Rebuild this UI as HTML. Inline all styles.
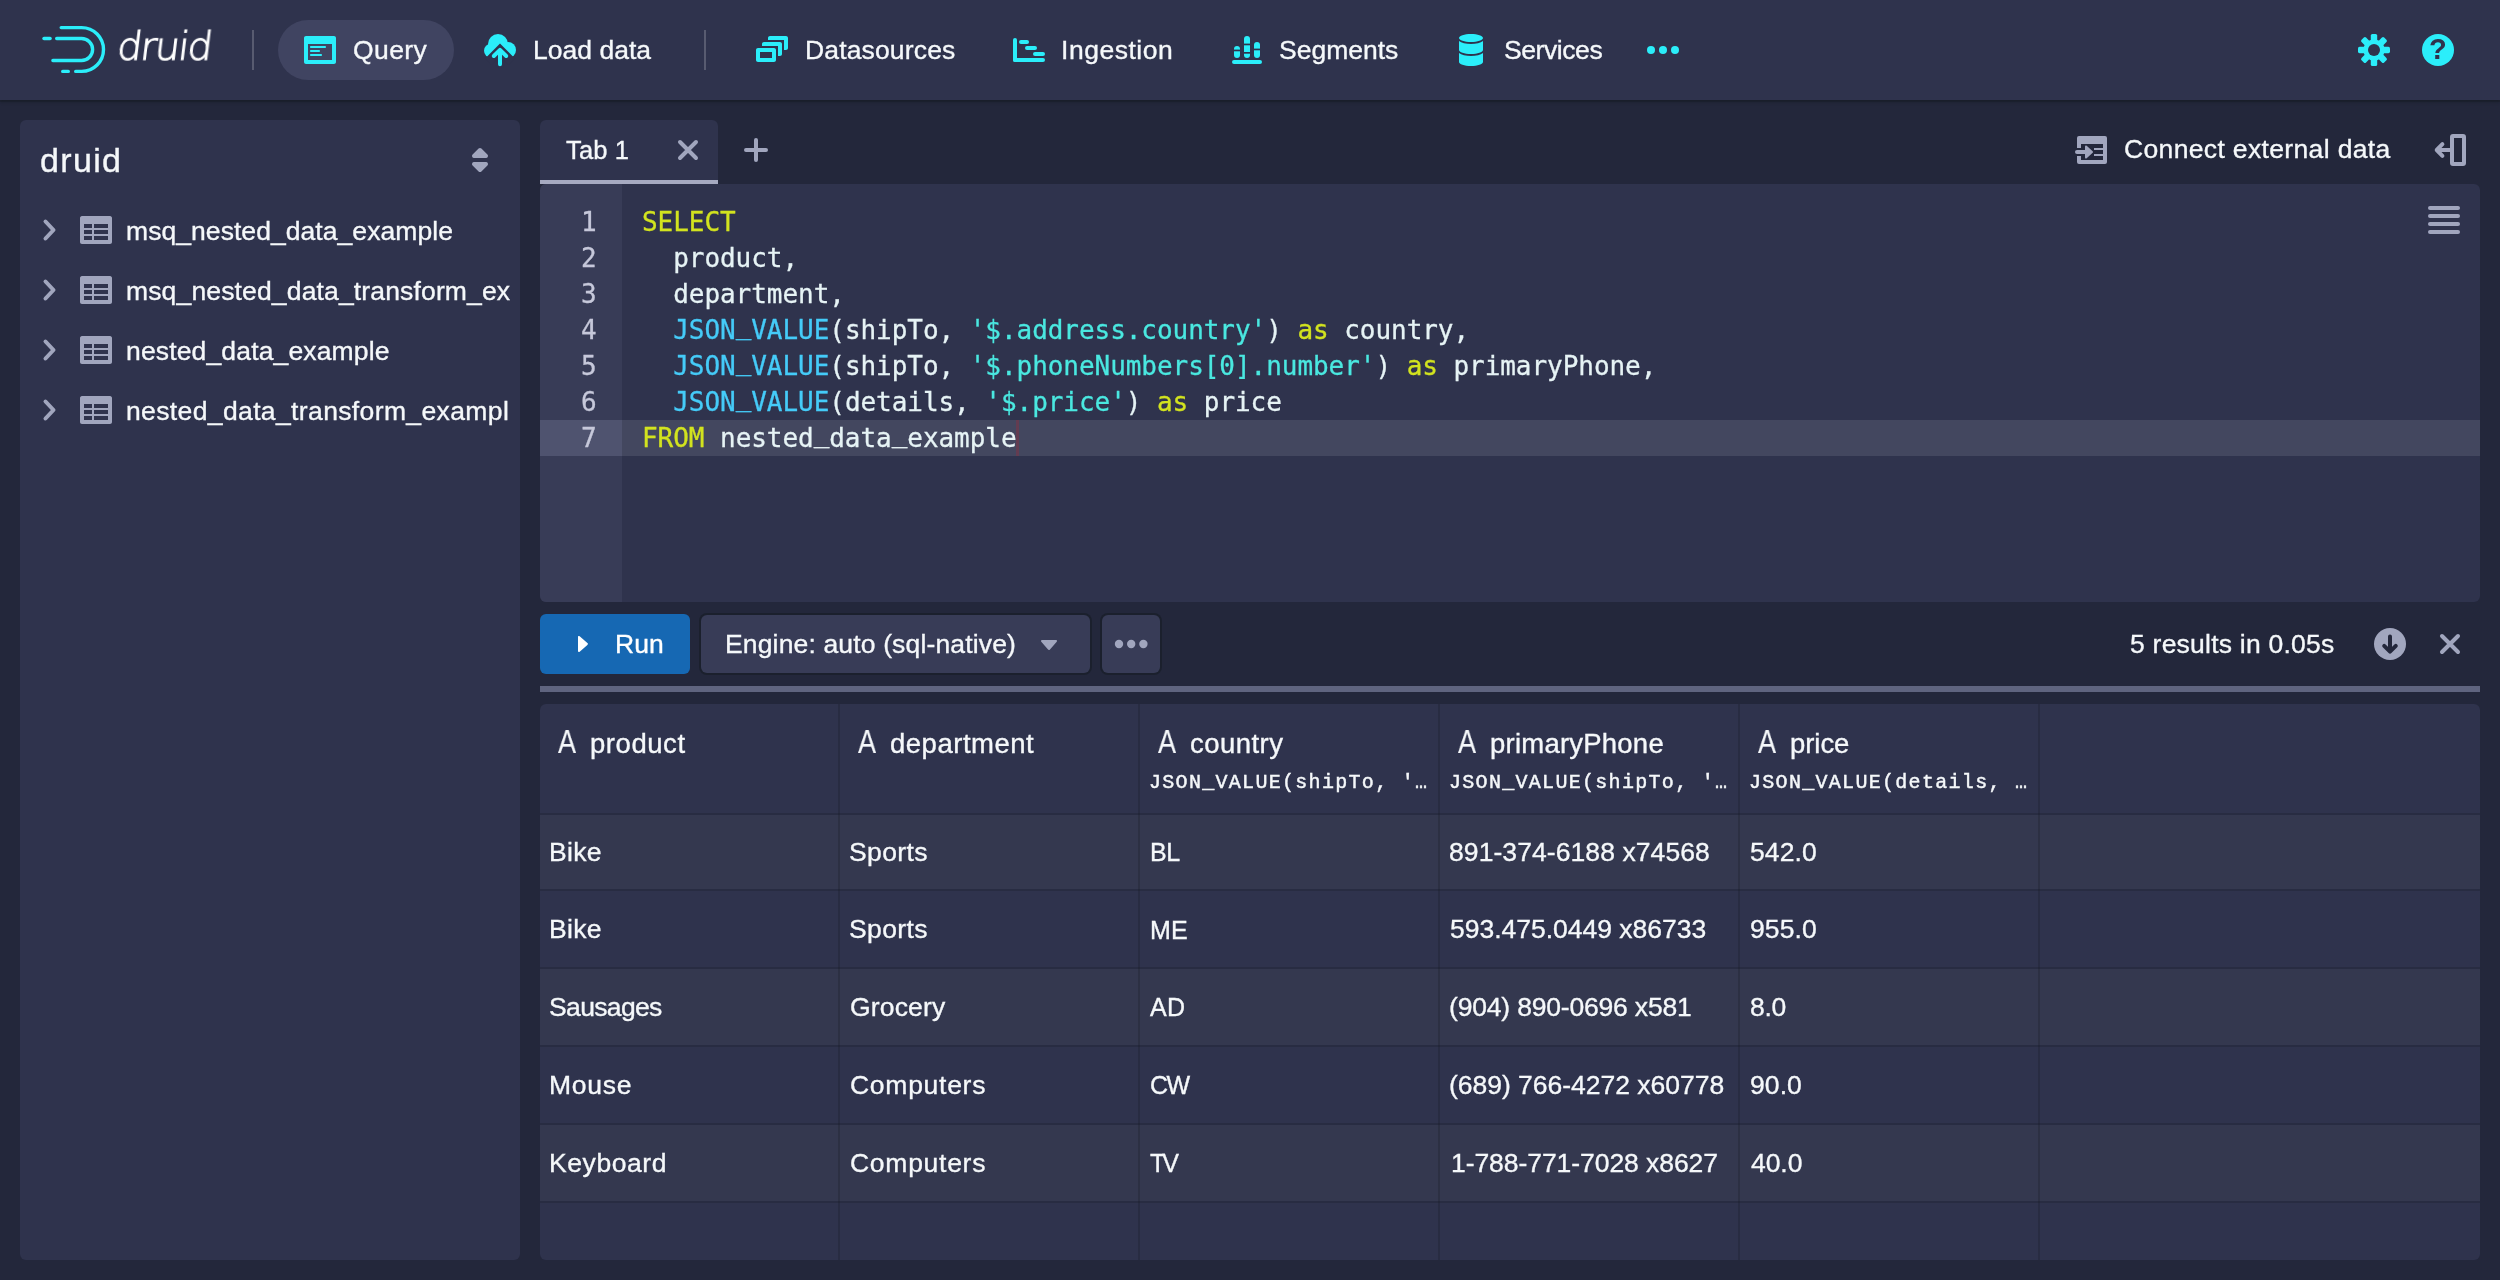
<!DOCTYPE html>
<html lang="en"><head><meta charset="utf-8"><title>Apache Druid</title><style>
html,body{margin:0;padding:0}
body{width:2500px;height:1280px;overflow:hidden;background:#23273b;position:relative;font-family:'Liberation Sans', 'DejaVu Sans', sans-serif}
.t,pre{will-change:transform}
.u{position:relative;top:-5px}
.t{position:absolute;white-space:pre;display:block;-webkit-text-stroke:0.35px currentColor}
.i{position:absolute;display:block;overflow:visible}
</style></head>
<body>
<header style="position:absolute;left:0;top:0;width:2500px;height:100px;background:#2f334d;box-shadow:0 0 0 2px rgba(16,22,26,.2),0 2px 3px rgba(16,22,26,.4);z-index:2">
<svg class="i" style="left:0px;top:0px" width="120" height="100" viewBox="0 0 120 100" ><g fill="none" stroke="#2beefa" stroke-width="3.4" stroke-linecap="round"><path d="M61.200 27.600H81.600a21.900 21.900 0 0 1 0 43.800H75.700"/><path d="M62.700 71.400H68.300"/><path d="M56.700 38.500H81.600a11 11 0 0 1 0 22H52.900"/><path d="M44 38.500H50.100"/></g></svg>
<span class="t" id="logo" style="left:116.00px;top:27.03px;font-size:39.5px;line-height:39.5px;letter-spacing:-1.750px;color:#ffffff;font-family:'DejaVu Sans Light','DejaVu Sans','Liberation Sans', 'DejaVu Sans', sans-serif;font-weight:200;-webkit-text-stroke:1px #fff;transform:skewX(-7deg);transform-origin:0 80%;">druid</span>
<div style="position:absolute;left:252px;top:30px;width:2px;height:40px;background:rgba(255,255,255,.2)"></div>
<div style="position:absolute;left:278px;top:20px;width:176px;height:60px;background:#404461;border-radius:30px"></div>
<svg class="i" style="left:304px;top:34px" width="32" height="32" viewBox="0 0 16 16" ><g fill="#2beefa" fill-rule="evenodd"><path d="M3.5 7h7c.28 0 .5-.22.5-.5s-.22-.5-.5-.5h-7c-.28 0-.5.22-.5.5s.22.5.5.5zM15 1H1c-.55 0-1 .45-1 1v12c0 .55.45 1 1 1h14c.55 0 1-.45 1-1V2c0-.55-.45-1-1-1zm-1 12H2V5h12v8zM3.5 9h4c.28 0 .5-.22.5-.5S7.78 8 7.5 8h-4c-.28 0-.5.22-.5.5s.22.5.5.5zm0 2h5c.28 0 .5-.22.5-.5s-.22-.5-.5-.5h-5c-.28 0-.5.22-.5.5s.22.5.5.5z"/></g></svg>
<span class="t" id="nav_query" style="left:353.00px;top:37.37px;font-size:26.5px;line-height:26.5px;letter-spacing:0.400px;color:#f5f8fa;font-family:'Liberation Sans', 'DejaVu Sans', sans-serif;">Query</span>
<svg class="i" style="left:484px;top:34px" width="32" height="32" viewBox="0 0 16 16" ><g fill="#2beefa"><circle cx="7" cy="5" r="5"/><circle cx="12" cy="8" r="4"/><circle cx="3.5" cy="8.4" r="3.5"/><rect x="3.5" y="6" width="8.5" height="5.700"/></g><rect x="0" y="11.600" width="16" height="4.400" fill="#2f334d"/><path d="M2 13.900L8 7.900l6 6" fill="none" stroke="#2f334d" stroke-width="4.400" stroke-linejoin="miter"/><path d="M8 15V9" fill="none" stroke="#2f334d" stroke-width="4.400" stroke-linecap="round"/><path d="M8 15.100V8.500M4.900 11L8 7.900l3.100 3.100" fill="none" stroke="#2beefa" stroke-width="2" stroke-linecap="round" stroke-linejoin="round"/></svg>
<span class="t" id="nav_load" style="left:533.00px;top:37.37px;font-size:26.5px;line-height:26.5px;letter-spacing:0.025px;color:#f5f8fa;font-family:'Liberation Sans', 'DejaVu Sans', sans-serif;">Load data</span>
<div style="position:absolute;left:704px;top:30px;width:2px;height:40px;background:rgba(255,255,255,.2)"></div>
<svg class="i" style="left:756px;top:34px" width="32" height="32" viewBox="0 0 16 16" ><g fill="#2beefa" fill-rule="evenodd"><path d="M12 3.98H4c-.55 0-1 .45-1 1v1h8v5h1c.55 0 1-.45 1-1v-5c0-.55-.45-1-1-1zm3-3H7c-.55 0-1 .45-1 1v1h8v5h1c.55 0 1-.45 1-1v-5c0-.55-.45-1-1-1zm-6 6H1c-.55 0-1 .45-1 1v5c0 .55.45 1 1 1h8c.55 0 1-.45 1-1v-5c0-.55-.45-1-1-1zm-1 5H2v-3h6v3z"/></g></svg>
<span class="t" id="nav_ds" style="left:805.00px;top:37.37px;font-size:26.5px;line-height:26.5px;letter-spacing:0.150px;color:#f5f8fa;font-family:'Liberation Sans', 'DejaVu Sans', sans-serif;">Datasources</span>
<svg class="i" style="left:1013px;top:34px" width="32" height="32" viewBox="0 0 16 16" ><g fill="#2beefa"><rect x="0" y="2" width="2" height="12" rx="1"/><rect x="0" y="12" width="16" height="2" rx="1"/><rect x="3" y="3" width="5" height="2" rx="1"/><rect x="6" y="6" width="6" height="2" rx="1"/><rect x="10" y="9" width="6" height="2" rx="1"/></g></svg>
<span class="t" id="nav_ing" style="left:1061.00px;top:37.37px;font-size:26.5px;line-height:26.5px;letter-spacing:0.525px;color:#f5f8fa;font-family:'Liberation Sans', 'DejaVu Sans', sans-serif;">Ingestion</span>
<svg class="i" style="left:1231px;top:34px" width="32" height="32" viewBox="0 0 32 32" ><g fill="#2beefa"><rect x="1" y="26" width="30" height="4" rx="2"/><rect x="3" y="12" width="6" height="12" rx="3"/><rect x="13" y="2" width="6" height="22" rx="3"/><rect x="23" y="8" width="6" height="16" rx="3"/></g><g fill="#2f334d"><rect x="3" y="15.6" width="6" height="1.7"/><rect x="13" y="9.6" width="6" height="1.7"/><rect x="13" y="18" width="6" height="1.7"/><rect x="23" y="14.6" width="6" height="1.7"/></g></svg>
<span class="t" id="nav_seg" style="left:1278.50px;top:37.37px;font-size:26.5px;line-height:26.5px;letter-spacing:0.007px;color:#f5f8fa;font-family:'Liberation Sans', 'DejaVu Sans', sans-serif;">Segments</span>
<svg class="i" style="left:1455px;top:34px" width="32" height="32" viewBox="0 0 16 16" ><g fill="#2beefa" fill-rule="evenodd"><path d="M8 4c3.31 0 6-.9 6-2s-2.69-2-6-2C4.68 0 2 .9 2 2s2.69 2 6 2zm-6-.48V8c0 1.1 2.69 2 6 2s6-.9 6-2V3.520C12.78 4.4 10.56 5 8 5s-4.78-.6-6-1.480zm0 6V14c0 1.100 2.690 2 6 2s6-.9 6-2V9.520C12.780 10.400 10.560 11 8 11s-4.780-.6-6-1.480z"/></g></svg>
<span class="t" id="nav_srv" style="left:1503.50px;top:37.37px;font-size:26.5px;line-height:26.5px;letter-spacing:-0.421px;color:#f5f8fa;font-family:'Liberation Sans', 'DejaVu Sans', sans-serif;">Services</span>
<svg class="i" style="left:1643px;top:42px" width="40" height="16" viewBox="0 0 40 16" ><circle cx="8" cy="8" r="4" fill="#2beefa"/><circle cx="20" cy="8" r="4" fill="#2beefa"/><circle cx="32" cy="8" r="4" fill="#2beefa"/></svg>
<svg class="i" style="left:2358px;top:34px" width="32" height="32" viewBox="0 0 32 32" ><g fill="#2beefa"><rect x="12.8" y="0" width="6.4" height="9" rx="1.6" transform="rotate(0 16 16)"/><rect x="12.8" y="0" width="6.4" height="9" rx="1.6" transform="rotate(45 16 16)"/><rect x="12.8" y="0" width="6.4" height="9" rx="1.6" transform="rotate(90 16 16)"/><rect x="12.8" y="0" width="6.4" height="9" rx="1.6" transform="rotate(135 16 16)"/><rect x="12.8" y="0" width="6.4" height="9" rx="1.6" transform="rotate(180 16 16)"/><rect x="12.8" y="0" width="6.4" height="9" rx="1.6" transform="rotate(225 16 16)"/><rect x="12.8" y="0" width="6.4" height="9" rx="1.6" transform="rotate(270 16 16)"/><rect x="12.8" y="0" width="6.4" height="9" rx="1.6" transform="rotate(315 16 16)"/><circle cx="16" cy="16" r="10.6"/></g><circle cx="16" cy="16" r="6" fill="#2f334d"/></svg>
<div style="position:absolute;left:2422px;top:34px;width:32px;height:32px;background:#2beefa;border-radius:16px"></div>
<span class="t" id="help_q" style="left:2429.30px;top:35.45px;font-size:29px;line-height:29px;letter-spacing:0.000px;color:#2f334d;font-family:'Liberation Sans', 'DejaVu Sans', sans-serif;font-weight:bold;-webkit-text-stroke:0;">?</span>
</header>
<nav style="position:absolute;left:20px;top:120px;width:500px;height:1140px;background:#2f334d;border-radius:6px;overflow:hidden">
</nav>
<span class="t" id="sb_title" style="left:39.50px;top:142.72px;font-size:34px;line-height:34px;letter-spacing:1.350px;color:#f5f8fa;font-family:'Liberation Sans', 'DejaVu Sans', sans-serif;">druid</span>
<svg class="i" style="left:464px;top:144px" width="32" height="32" viewBox="0 0 16 16" ><g fill="#a1a6be" fill-rule="evenodd"><path d="M5 7h6a1.003 1.003 0 00.71-1.71l-3-3C8.53 2.11 8.28 2 8 2s-.53.11-.71.29l-3 3A1.003 1.003 0 005 7zm6 2H5a1.003 1.003 0 00-.71 1.710l3 3c.18.18.43.29.71.29s.53-.11.71-.29l3-3A1.003 1.003 0 0011 9z"/></g></svg>
<svg class="i" style="left:34px;top:214px" width="32" height="32" viewBox="0 0 32 32" ><path d="M11.5 7.5L19.5 16l-8 8.500" fill="none" stroke="#a1a6be" stroke-width="4" stroke-linecap="round" stroke-linejoin="round"/></svg>
<svg class="i" style="left:80px;top:214px" width="32" height="32" viewBox="0 0 16 16" ><g fill="#a1a6be" fill-rule="evenodd"><path d="M15 1H1c-.6 0-1 .5-1 1v12c0 .6.4 1 1 1h14c.6 0 1-.4 1-1V2c0-.5-.4-1-1-1zM6 13H2v-2h4v2zm0-3H2V8h4v2zm0-3H2V5h4v2zm8 6H7v-2h7v2zm0-3H7V8h7v2zm0-3H7V5h7v2z"/></g></svg>
<span class="t" id="tree0" style="left:126.00px;top:217.57px;font-size:26.5px;line-height:26.5px;letter-spacing:0.059px;color:#f5f8fa;font-family:'Liberation Sans', 'DejaVu Sans', sans-serif;">msq_nested_data_example</span>
<svg class="i" style="left:34px;top:274px" width="32" height="32" viewBox="0 0 32 32" ><path d="M11.5 7.5L19.5 16l-8 8.500" fill="none" stroke="#a1a6be" stroke-width="4" stroke-linecap="round" stroke-linejoin="round"/></svg>
<svg class="i" style="left:80px;top:274px" width="32" height="32" viewBox="0 0 16 16" ><g fill="#a1a6be" fill-rule="evenodd"><path d="M15 1H1c-.6 0-1 .5-1 1v12c0 .6.4 1 1 1h14c.6 0 1-.4 1-1V2c0-.5-.4-1-1-1zM6 13H2v-2h4v2zm0-3H2V8h4v2zm0-3H2V5h4v2zm8 6H7v-2h7v2zm0-3H7V8h7v2zm0-3H7V5h7v2z"/></g></svg>
<span class="t" id="tree1" style="left:126.00px;top:277.57px;font-size:26.5px;line-height:26.5px;letter-spacing:0.150px;color:#f5f8fa;font-family:'Liberation Sans', 'DejaVu Sans', sans-serif;">msq_nested_data_transform_ex</span>
<svg class="i" style="left:34px;top:334px" width="32" height="32" viewBox="0 0 32 32" ><path d="M11.5 7.5L19.5 16l-8 8.500" fill="none" stroke="#a1a6be" stroke-width="4" stroke-linecap="round" stroke-linejoin="round"/></svg>
<svg class="i" style="left:80px;top:334px" width="32" height="32" viewBox="0 0 16 16" ><g fill="#a1a6be" fill-rule="evenodd"><path d="M15 1H1c-.6 0-1 .5-1 1v12c0 .6.4 1 1 1h14c.6 0 1-.4 1-1V2c0-.5-.4-1-1-1zM6 13H2v-2h4v2zm0-3H2V8h4v2zm0-3H2V5h4v2zm8 6H7v-2h7v2zm0-3H7V8h7v2zm0-3H7V5h7v2z"/></g></svg>
<span class="t" id="tree2" style="left:126.00px;top:337.57px;font-size:26.5px;line-height:26.5px;letter-spacing:0.150px;color:#f5f8fa;font-family:'Liberation Sans', 'DejaVu Sans', sans-serif;">nested_data_example</span>
<svg class="i" style="left:34px;top:394px" width="32" height="32" viewBox="0 0 32 32" ><path d="M11.5 7.5L19.5 16l-8 8.500" fill="none" stroke="#a1a6be" stroke-width="4" stroke-linecap="round" stroke-linejoin="round"/></svg>
<svg class="i" style="left:80px;top:394px" width="32" height="32" viewBox="0 0 16 16" ><g fill="#a1a6be" fill-rule="evenodd"><path d="M15 1H1c-.6 0-1 .5-1 1v12c0 .6.4 1 1 1h14c.6 0 1-.4 1-1V2c0-.5-.4-1-1-1zM6 13H2v-2h4v2zm0-3H2V8h4v2zm0-3H2V5h4v2zm8 6H7v-2h7v2zm0-3H7V8h7v2zm0-3H7V5h7v2z"/></g></svg>
<span class="t" id="tree3" style="left:126.00px;top:397.57px;font-size:26.5px;line-height:26.5px;letter-spacing:0.373px;color:#f5f8fa;font-family:'Liberation Sans', 'DejaVu Sans', sans-serif;">nested_data_transform_exampl</span>
<div style="position:absolute;left:540px;top:120px;width:178px;height:64px;background:#2f334d;border-radius:6px 6px 0 0"></div>
<div style="position:absolute;left:540px;top:180px;width:178px;height:4px;background:#a6aac1"></div>
<span class="t" id="tab1" style="left:565.50px;top:137.91px;font-size:25.5px;line-height:25.5px;letter-spacing:0.150px;color:#f5f8fa;font-family:'Liberation Sans', 'DejaVu Sans', sans-serif;">Tab 1</span>
<svg class="i" style="left:672px;top:134px" width="32" height="32" viewBox="0 0 32 32" ><path d="M8 8l16 16M24 8L8 24" stroke="#a1a6be" stroke-width="4" stroke-linecap="round"/></svg>
<svg class="i" style="left:740px;top:134px" width="32" height="32" viewBox="0 0 32 32" ><path d="M16 6v20M6 16h20" stroke="#a1a6be" stroke-width="4" stroke-linecap="round"/></svg>
<svg class="i" style="left:2075px;top:134px" width="34" height="32" viewBox="0 0 34 32" ><rect x="2" y="2" width="30" height="28" rx="2" fill="#a1a6be"/><rect x="6" y="10" width="22" height="16" fill="#23273b"/><rect x="19" y="14" width="9" height="2" fill="#a1a6be"/><rect x="19" y="20" width="9" height="2" fill="#a1a6be"/><rect x="0" y="14" width="6.500" height="8" fill="#23273b"/><path d="M2 18h12" stroke="#a1a6be" stroke-width="4" stroke-linecap="round"/><path d="M11 12.500l6 5.500-6 5.500z" fill="#a1a6be" stroke="#a1a6be" stroke-width="2" stroke-linejoin="round"/></svg>
<span class="t" id="connect" style="left:2124.00px;top:136.17px;font-size:26.5px;line-height:26.5px;letter-spacing:0.350px;color:#f5f8fa;font-family:'Liberation Sans', 'DejaVu Sans', sans-serif;">Connect external data</span>
<svg class="i" style="left:2434px;top:134px" width="32" height="32" viewBox="0 0 32 32" ><rect x="18" y="2" width="12" height="28" rx="1" fill="none" stroke="#a1a6be" stroke-width="4"/><path d="M16 16H4M8.400 10.200L2.700 16l5.700 5.800" fill="none" stroke="#a1a6be" stroke-width="4" stroke-linecap="round" stroke-linejoin="round"/></svg>
<section style="position:absolute;left:540px;top:184px;width:1940px;height:418px;background:#2f334d;border-radius:6px;overflow:hidden">
<div style="position:absolute;left:0px;top:0px;width:82px;height:418px;background:#383c57"></div>
<div style="position:absolute;left:0px;top:236px;width:1940px;height:36px;background:#43475f"></div>
<div style="position:absolute;left:0px;top:236px;width:82px;height:36px;background:#4f536f"></div>
<div style="position:absolute;left:476px;top:236px;width:3px;height:36px;background:#7a3548;opacity:.6"></div>
</section>
<pre id="code" style="position:absolute;left:642px;top:204px;margin:0;font-family:'DejaVu Sans Mono', 'Liberation Mono', monospace;font-size:26px;line-height:36px;letter-spacing:-0.05px;color:#e6f3f5;white-space:pre;-webkit-text-stroke:0.3px currentColor"><span style="color:#d2e31f">SELECT</span>
  product,
  department,
  <span style="color:#45cbf8">JSON<span class="u">_</span>VALUE</span>(shipTo, <span style="color:#4ae8e0">&#x27;$.address.country&#x27;</span>) <span style="color:#d2e31f">as</span> country,
  <span style="color:#45cbf8">JSON<span class="u">_</span>VALUE</span>(shipTo, <span style="color:#4ae8e0">&#x27;$.phoneNumbers[0].number&#x27;</span>) <span style="color:#d2e31f">as</span> primaryPhone,
  <span style="color:#45cbf8">JSON<span class="u">_</span>VALUE</span>(details, <span style="color:#4ae8e0">&#x27;$.price&#x27;</span>) <span style="color:#d2e31f">as</span> price
<span style="color:#d2e31f">FROM</span> nested<span class="u">_</span>data<span class="u">_</span>example</pre>
<pre id="lnum" style="position:absolute;left:580.5px;top:204px;margin:0;font-family:'DejaVu Sans Mono', 'Liberation Mono', monospace;font-size:26px;line-height:36px;letter-spacing:-0.050px;color:#c6c8da;white-space:pre;-webkit-text-stroke:0.3px currentColor">1
2
3
4
5
6
7</pre>
<svg class="i" style="left:2428px;top:204px" width="32" height="32" viewBox="0 0 32 32" ><rect x="0" y="2" width="32" height="4" rx="2" fill="#a1a6be"/><rect x="0" y="10" width="32" height="4" rx="2" fill="#a1a6be"/><rect x="0" y="18" width="32" height="4" rx="2" fill="#a1a6be"/><rect x="0" y="26" width="32" height="4" rx="2" fill="#a1a6be"/></svg>
<div style="position:absolute;left:540px;top:614px;width:150px;height:60px;background:#1668b3;border-radius:6px"></div>
<svg class="i" style="left:566px;top:628px" width="32" height="32" viewBox="0 0 16 16" ><g fill="#ffffff" fill-rule="evenodd"><path d="M11 8c0-.15-.07-.28-.17-.37l-4-3.500A.495.495 0 006 4.500v7a.495.495 0 00.83.370l4-3.500c.1-.9.170-.220.170-.370z"/></g></svg>
<span class="t" id="run" style="left:614.50px;top:630.57px;font-size:26.5px;line-height:26.5px;letter-spacing:0.050px;color:#ffffff;font-family:'Liberation Sans', 'DejaVu Sans', sans-serif;">Run</span>
<div style="position:absolute;left:701px;top:615px;width:389px;height:58px;background:#383c57;border-radius:6px;box-shadow:0 0 0 2px rgba(16,22,26,.4)"></div>
<span class="t" id="engine" style="left:724.50px;top:630.57px;font-size:26.5px;line-height:26.5px;letter-spacing:0.150px;color:#f5f8fa;font-family:'Liberation Sans', 'DejaVu Sans', sans-serif;">Engine: auto (sql-native)</span>
<svg class="i" style="left:1033px;top:628px" width="32" height="32" viewBox="0 0 16 16" ><g fill="#a1a6be" fill-rule="evenodd"><path d="M12 6.500c0-.28-.22-.5-.5-.5h-7a.495.495 0 00-.37.830l3.500 4c.9.1.220.170.370.170s.280-.070.370-.170l3.500-4c.080-.090.130-.200.130-.330z"/></g></svg>
<div style="position:absolute;left:1102px;top:615px;width:58px;height:58px;background:#383c57;border-radius:6px;box-shadow:0 0 0 2px rgba(16,22,26,.4)"></div>
<svg class="i" style="left:1110.8px;top:636px" width="40.4" height="16" viewBox="0 0 40.4 16" ><circle cx="8.0" cy="8" r="4.2" fill="#a1a6be"/><circle cx="20.2" cy="8" r="4.2" fill="#a1a6be"/><circle cx="32.4" cy="8" r="4.2" fill="#a1a6be"/></svg>
<span class="t" id="results" style="left:2129.50px;top:630.57px;font-size:26.5px;line-height:26.5px;letter-spacing:0.234px;color:#f5f8fa;font-family:'Liberation Sans', 'DejaVu Sans', sans-serif;">5 results in 0.05s</span>
<svg class="i" style="left:2374px;top:628px" width="32" height="32" viewBox="0 0 32 32" ><circle cx="16" cy="16" r="16" fill="#a1a6be"/><path d="M16 8.500v14.500M10.200 17.800L16 23.600l5.800-5.800" fill="none" stroke="#23273b" stroke-width="4" stroke-linecap="round" stroke-linejoin="round"/></svg>
<svg class="i" style="left:2434px;top:628px" width="32" height="32" viewBox="0 0 32 32" ><path d="M8 8l16 16M24 8L8 24" stroke="#a1a6be" stroke-width="4" stroke-linecap="round"/></svg>
<div style="position:absolute;left:540px;top:686px;width:1940px;height:6px;background:#5f647f"></div>
<section style="position:absolute;left:540px;top:704px;width:1940px;height:556px;background:#2f334d;border-radius:6px;overflow:hidden">
<div style="position:absolute;left:0px;top:111px;width:1940px;height:74px;background:#34384f"></div>
<div style="position:absolute;left:0px;top:265px;width:1940px;height:76px;background:#34384f"></div>
<div style="position:absolute;left:0px;top:421px;width:1940px;height:76px;background:#34384f"></div>
<div style="position:absolute;left:0px;top:109px;width:1940px;height:2px;background:rgba(16,22,26,.22)"></div>
<div style="position:absolute;left:0px;top:185px;width:1940px;height:2px;background:rgba(16,22,26,.22)"></div>
<div style="position:absolute;left:0px;top:263px;width:1940px;height:2px;background:rgba(16,22,26,.22)"></div>
<div style="position:absolute;left:0px;top:341px;width:1940px;height:2px;background:rgba(16,22,26,.22)"></div>
<div style="position:absolute;left:0px;top:419px;width:1940px;height:2px;background:rgba(16,22,26,.22)"></div>
<div style="position:absolute;left:0px;top:497px;width:1940px;height:2px;background:rgba(16,22,26,.22)"></div>
<div style="position:absolute;left:298px;top:0px;width:2px;height:556px;background:rgba(16,22,26,.22)"></div>
<div style="position:absolute;left:598px;top:0px;width:2px;height:556px;background:rgba(16,22,26,.22)"></div>
<div style="position:absolute;left:898px;top:0px;width:2px;height:556px;background:rgba(16,22,26,.22)"></div>
<div style="position:absolute;left:1198px;top:0px;width:2px;height:556px;background:rgba(16,22,26,.22)"></div>
<div style="position:absolute;left:1498px;top:0px;width:2px;height:556px;background:rgba(16,22,26,.22)"></div>
</section>
<span class="t" id="hA0" style="left:558.40px;top:725.37px;font-size:33px;line-height:33px;letter-spacing:0.000px;color:#f5f8fa;font-family:'Liberation Sans', 'DejaVu Sans', sans-serif;transform:scaleX(.82);transform-origin:0 0;-webkit-text-stroke:0.15px currentColor;">A</span>
<span class="t" id="h0" style="left:589.50px;top:730.02px;font-size:27.5px;line-height:27.5px;letter-spacing:0.555px;color:#f5f8fa;font-family:'Liberation Sans', 'DejaVu Sans', sans-serif;">product</span>
<span class="t" id="hA1" style="left:858.40px;top:725.37px;font-size:33px;line-height:33px;letter-spacing:0.000px;color:#f5f8fa;font-family:'Liberation Sans', 'DejaVu Sans', sans-serif;transform:scaleX(.82);transform-origin:0 0;-webkit-text-stroke:0.15px currentColor;">A</span>
<span class="t" id="h1" style="left:889.50px;top:730.02px;font-size:27.5px;line-height:27.5px;letter-spacing:0.513px;color:#f5f8fa;font-family:'Liberation Sans', 'DejaVu Sans', sans-serif;">department</span>
<span class="t" id="hA2" style="left:1158.40px;top:725.37px;font-size:33px;line-height:33px;letter-spacing:0.000px;color:#f5f8fa;font-family:'Liberation Sans', 'DejaVu Sans', sans-serif;transform:scaleX(.82);transform-origin:0 0;-webkit-text-stroke:0.15px currentColor;">A</span>
<span class="t" id="h2" style="left:1189.50px;top:730.02px;font-size:27.5px;line-height:27.5px;letter-spacing:0.454px;color:#f5f8fa;font-family:'Liberation Sans', 'DejaVu Sans', sans-serif;">country</span>
<span class="t" id="f2" style="left:1149.00px;top:772.67px;font-size:20px;line-height:20px;letter-spacing:1.300px;color:#f5f8fa;font-family:'Liberation Mono', 'DejaVu Sans Mono', monospace;-webkit-text-stroke:0.45px currentColor;">JSON_VALUE(shipTo, &#x27;…</span>
<span class="t" id="hA3" style="left:1458.40px;top:725.37px;font-size:33px;line-height:33px;letter-spacing:0.000px;color:#f5f8fa;font-family:'Liberation Sans', 'DejaVu Sans', sans-serif;transform:scaleX(.82);transform-origin:0 0;-webkit-text-stroke:0.15px currentColor;">A</span>
<span class="t" id="h3" style="left:1489.50px;top:730.02px;font-size:27.5px;line-height:27.5px;letter-spacing:0.227px;color:#f5f8fa;font-family:'Liberation Sans', 'DejaVu Sans', sans-serif;">primaryPhone</span>
<span class="t" id="f3" style="left:1449.00px;top:772.67px;font-size:20px;line-height:20px;letter-spacing:1.300px;color:#f5f8fa;font-family:'Liberation Mono', 'DejaVu Sans Mono', monospace;-webkit-text-stroke:0.45px currentColor;">JSON_VALUE(shipTo, &#x27;…</span>
<span class="t" id="hA4" style="left:1758.40px;top:725.37px;font-size:33px;line-height:33px;letter-spacing:0.000px;color:#f5f8fa;font-family:'Liberation Sans', 'DejaVu Sans', sans-serif;transform:scaleX(.82);transform-origin:0 0;-webkit-text-stroke:0.15px currentColor;">A</span>
<span class="t" id="h4" style="left:1789.50px;top:730.02px;font-size:27.5px;line-height:27.5px;letter-spacing:-0.050px;color:#f5f8fa;font-family:'Liberation Sans', 'DejaVu Sans', sans-serif;">price</span>
<span class="t" id="f4" style="left:1749.00px;top:772.67px;font-size:20px;line-height:20px;letter-spacing:1.300px;color:#f5f8fa;font-family:'Liberation Mono', 'DejaVu Sans Mono', monospace;-webkit-text-stroke:0.45px currentColor;">JSON_VALUE(details, …</span>
<span class="t" id="c0_0" style="left:548.50px;top:838.57px;font-size:26.5px;line-height:26.5px;letter-spacing:0.290px;color:#f5f8fa;font-family:'Liberation Sans', 'DejaVu Sans', sans-serif;">Bike</span>
<span class="t" id="c0_1" style="left:848.90px;top:838.57px;font-size:26.5px;line-height:26.5px;letter-spacing:0.390px;color:#f5f8fa;font-family:'Liberation Sans', 'DejaVu Sans', sans-serif;">Sports</span>
<span class="t" id="c0_2" style="left:1149.80px;top:839.84px;font-size:25px;line-height:25px;letter-spacing:-0.400px;color:#f5f8fa;font-family:'Liberation Sans', 'DejaVu Sans', sans-serif;">BL</span>
<span class="t" id="c0_3" style="left:1449.00px;top:838.57px;font-size:26.5px;line-height:26.5px;letter-spacing:0.082px;color:#f5f8fa;font-family:'Liberation Sans', 'DejaVu Sans', sans-serif;">891-374-6188 x74568</span>
<span class="t" id="c0_4" style="left:1749.60px;top:838.57px;font-size:26.5px;line-height:26.5px;letter-spacing:0.100px;color:#f5f8fa;font-family:'Liberation Sans', 'DejaVu Sans', sans-serif;">542.0</span>
<span class="t" id="c1_0" style="left:548.50px;top:916.27px;font-size:26.5px;line-height:26.5px;letter-spacing:0.290px;color:#f5f8fa;font-family:'Liberation Sans', 'DejaVu Sans', sans-serif;">Bike</span>
<span class="t" id="c1_1" style="left:848.90px;top:916.27px;font-size:26.5px;line-height:26.5px;letter-spacing:0.390px;color:#f5f8fa;font-family:'Liberation Sans', 'DejaVu Sans', sans-serif;">Sports</span>
<span class="t" id="c1_2" style="left:1149.80px;top:917.54px;font-size:25px;line-height:25px;letter-spacing:0.200px;color:#f5f8fa;font-family:'Liberation Sans', 'DejaVu Sans', sans-serif;">ME</span>
<span class="t" id="c1_3" style="left:1449.50px;top:916.27px;font-size:26.5px;line-height:26.5px;letter-spacing:-0.010px;color:#f5f8fa;font-family:'Liberation Sans', 'DejaVu Sans', sans-serif;">593.475.0449 x86733</span>
<span class="t" id="c1_4" style="left:1749.60px;top:916.27px;font-size:26.5px;line-height:26.5px;letter-spacing:0.100px;color:#f5f8fa;font-family:'Liberation Sans', 'DejaVu Sans', sans-serif;">955.0</span>
<span class="t" id="c2_0" style="left:549.30px;top:994.17px;font-size:26.5px;line-height:26.5px;letter-spacing:-0.643px;color:#f5f8fa;font-family:'Liberation Sans', 'DejaVu Sans', sans-serif;">Sausages</span>
<span class="t" id="c2_1" style="left:850.10px;top:994.17px;font-size:26.5px;line-height:26.5px;letter-spacing:0.150px;color:#f5f8fa;font-family:'Liberation Sans', 'DejaVu Sans', sans-serif;">Grocery</span>
<span class="t" id="c2_2" style="left:1149.50px;top:995.44px;font-size:25px;line-height:25px;letter-spacing:0.300px;color:#f5f8fa;font-family:'Liberation Sans', 'DejaVu Sans', sans-serif;">AD</span>
<span class="t" id="c2_3" style="left:1448.80px;top:994.17px;font-size:26.5px;line-height:26.5px;letter-spacing:-0.183px;color:#f5f8fa;font-family:'Liberation Sans', 'DejaVu Sans', sans-serif;">(904) 890-0696 x581</span>
<span class="t" id="c2_4" style="left:1749.80px;top:994.17px;font-size:26.5px;line-height:26.5px;letter-spacing:-0.350px;color:#f5f8fa;font-family:'Liberation Sans', 'DejaVu Sans', sans-serif;">8.0</span>
<span class="t" id="c3_0" style="left:548.50px;top:1072.17px;font-size:26.5px;line-height:26.5px;letter-spacing:0.750px;color:#f5f8fa;font-family:'Liberation Sans', 'DejaVu Sans', sans-serif;">Mouse</span>
<span class="t" id="c3_1" style="left:850.10px;top:1072.17px;font-size:26.5px;line-height:26.5px;letter-spacing:0.725px;color:#f5f8fa;font-family:'Liberation Sans', 'DejaVu Sans', sans-serif;">Computers</span>
<span class="t" id="c3_2" style="left:1149.70px;top:1073.44px;font-size:25px;line-height:25px;letter-spacing:-1.600px;color:#f5f8fa;font-family:'Liberation Sans', 'DejaVu Sans', sans-serif;">CW</span>
<span class="t" id="c3_3" style="left:1448.80px;top:1072.17px;font-size:26.5px;line-height:26.5px;letter-spacing:-0.020px;color:#f5f8fa;font-family:'Liberation Sans', 'DejaVu Sans', sans-serif;">(689) 766-4272 x60778</span>
<span class="t" id="c3_4" style="left:1749.80px;top:1072.17px;font-size:26.5px;line-height:26.5px;letter-spacing:0.079px;color:#f5f8fa;font-family:'Liberation Sans', 'DejaVu Sans', sans-serif;">90.0</span>
<span class="t" id="c4_0" style="left:548.50px;top:1150.17px;font-size:26.5px;line-height:26.5px;letter-spacing:0.579px;color:#f5f8fa;font-family:'Liberation Sans', 'DejaVu Sans', sans-serif;">Keyboard</span>
<span class="t" id="c4_1" style="left:850.10px;top:1150.17px;font-size:26.5px;line-height:26.5px;letter-spacing:0.725px;color:#f5f8fa;font-family:'Liberation Sans', 'DejaVu Sans', sans-serif;">Computers</span>
<span class="t" id="c4_2" style="left:1149.50px;top:1151.44px;font-size:25px;line-height:25px;letter-spacing:-3.000px;color:#f5f8fa;font-family:'Liberation Sans', 'DejaVu Sans', sans-serif;">TV</span>
<span class="t" id="c4_3" style="left:1450.50px;top:1150.17px;font-size:26.5px;line-height:26.5px;letter-spacing:-0.061px;color:#f5f8fa;font-family:'Liberation Sans', 'DejaVu Sans', sans-serif;">1-788-771-7028 x8627</span>
<span class="t" id="c4_4" style="left:1750.60px;top:1150.17px;font-size:26.5px;line-height:26.5px;letter-spacing:-0.055px;color:#f5f8fa;font-family:'Liberation Sans', 'DejaVu Sans', sans-serif;">40.0</span>
</body></html>
